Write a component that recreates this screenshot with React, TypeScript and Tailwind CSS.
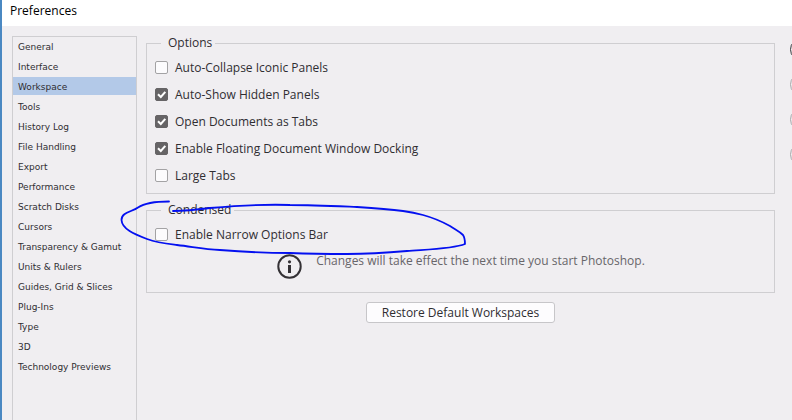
import React, { useState } from "react";

const sections = [
  "General",
  "Interface",
  "Workspace",
  "Tools",
  "History Log",
  "File Handling",
  "Export",
  "Performance",
  "Scratch Disks",
  "Cursors",
  "Transparency & Gamut",
  "Units & Rulers",
  "Guides, Grid & Slices",
  "Plug-Ins",
  "Type",
  "3D",
  "Technology Previews",
];

const options = [
  { label: "Auto-Collapse Iconic Panels", checked: false },
  { label: "Auto-Show Hidden Panels", checked: true },
  { label: "Open Documents as Tabs", checked: true },
  { label: "Enable Floating Document Window Docking", checked: true },
  { label: "Large Tabs", checked: false },
];

const actions = ["OK", "Cancel", "Prev", "Next"];

function CheckOption({ label, initial }: { label: string; initial: boolean }) {
  const [checked, setChecked] = useState(initial);
  return (
    <label className="flex h-[27px] w-fit items-center gap-[7px]">
      <span className="grid size-[13px] shrink-0">
        <input
          type="checkbox"
          checked={checked}
          onChange={(e) => setChecked(e.target.checked)}
          className="col-start-1 row-start-1 size-[13px] appearance-none rounded-[2px] border border-[#a3a2a4] bg-[#fcfbfd] checked:border-[#666466] checked:bg-[#666466]"
        />
        {checked && (
          <svg viewBox="0 0 13 13" className="pointer-events-none col-start-1 row-start-1 size-[13px]" fill="none" stroke="#fff" strokeWidth="2">
            <path d="M3 6.3 5.8 9 10.3 3.8" />
          </svg>
        )}
      </span>
      <span>{label}</span>
    </label>
  );
}

function Group({ title, children }: { title: string; children: React.ReactNode }) {
  return (
    <fieldset className="min-w-0 border border-[#cfced1] px-2">
      <legend className="ml-[6px] pr-[3px] pl-[7px] leading-4">{title}</legend>
      {children}
    </fieldset>
  );
}

export default function App() {
  const [active, setActive] = useState("Workspace");
  return (
    <div className="flex min-h-screen flex-col overflow-hidden border-l-2 border-[#4a88c2] bg-[#f0eef1] font-['Open_Sans',sans-serif] text-[12px] leading-4 text-[#2f2d31]">
      <header className="flex h-[26px] items-center bg-white px-2 pb-1 text-black">
        <h1>Preferences</h1>
      </header>
      <div className="relative flex flex-1 pl-[10px]">
        <nav aria-label="Sections" className="mt-[10px] flex w-[125px] shrink-0 flex-col gap-[2px] border border-b-0 border-[#cfced1] font-['DejaVu_Sans',sans-serif] text-[9px]">
          {sections.map((name) => (
            <button
              key={name}
              type="button"
              onClick={() => setActive(name)}
              className={
                name === active
                  ? "h-[18px] bg-[#b3c9e8] pt-[2px] pl-[5px] text-left whitespace-nowrap"
                  : "h-[18px] pt-[2px] pl-[5px] text-left whitespace-nowrap"
              }
            >
              {name}
            </button>
          ))}
        </nav>
        <main className="ml-[9px] flex min-w-0 flex-1 flex-col pt-[9px]">
          <Group title="Options">
            <div className="pt-[3px] pb-1">
              {options.map((o) => (
                <CheckOption key={o.label} label={o.label} initial={o.checked} />
              ))}
            </div>
          </Group>
          <div className="mt-2">
            <Group title="Condensed">
              <div className="pt-[3px] pb-[13px]">
                <CheckOption label="Enable Narrow Options Bar" initial={false} />
                <div className="flex justify-center gap-[14px] pt-[5px]">
                  <svg viewBox="0 0 26 26" className="size-[26px]" aria-hidden="true">
                    <circle cx="13.5" cy="13.5" r="11.2" fill="none" stroke="#343135" strokeWidth="2" />
                    <circle cx="13.5" cy="8.8" r="1.6" fill="#343135" />
                    <path d="M12 12h3v8h-3z" fill="#343135" />
                  </svg>
                  <p className="text-[#68666a]">Changes will take effect the next time you start Photoshop.</p>
                </div>
              </div>
            </Group>
          </div>
          <button type="button" className="mt-[9px] h-[21px] self-center rounded-[3px] border border-[#c7c6c9] bg-[#fdfcfe] px-[15px]">
            Restore Default Workspaces
          </button>
        </main>
        <div className="flex w-[17px] shrink-0 flex-col gap-3 overflow-hidden pt-3 pl-[15px]">
          {actions.map((name, i) => (
            <button
              key={name}
              type="button"
              aria-label={name}
              className={
                i === 0
                  ? "h-[23px] w-20 rounded-full border border-[#3c3a3e]"
                  : "h-[23px] w-20 rounded-full border border-[#a9a8ab]"
              }
            />
          ))}
        </div>
        <svg
          viewBox="0 0 360 70"
          className="pointer-events-none absolute top-[169px] left-[113px] h-[70px] w-[360px]"
          fill="none"
          stroke="#0410f0"
          strokeWidth="1.8"
          strokeLinecap="round"
          strokeLinejoin="round"
          aria-hidden="true"
        >
          <path d="M54 6.500C42 6.500 29 8.500 23 12.500C17 17 6.500 17 6.500 25C7 34 19 39 32 44C43 48 54 49 62 50C79 52 89 54 105 55C130 57 155 58 175 58C200 59 215 59 232 59C255 59 275 57.500 292 56C310 54.500 338 54 350 49C350 46 350 43 348 40C344 36 341 35 335 31C326 26 319 23 308 20C301 18 296 17 288 16C273 14 258 13 242 12C218 11 197 10 175 10C145 9 118 11 95 13C80 15 70 16 58 16" />
        </svg>
      </div>
    </div>
  );
}
